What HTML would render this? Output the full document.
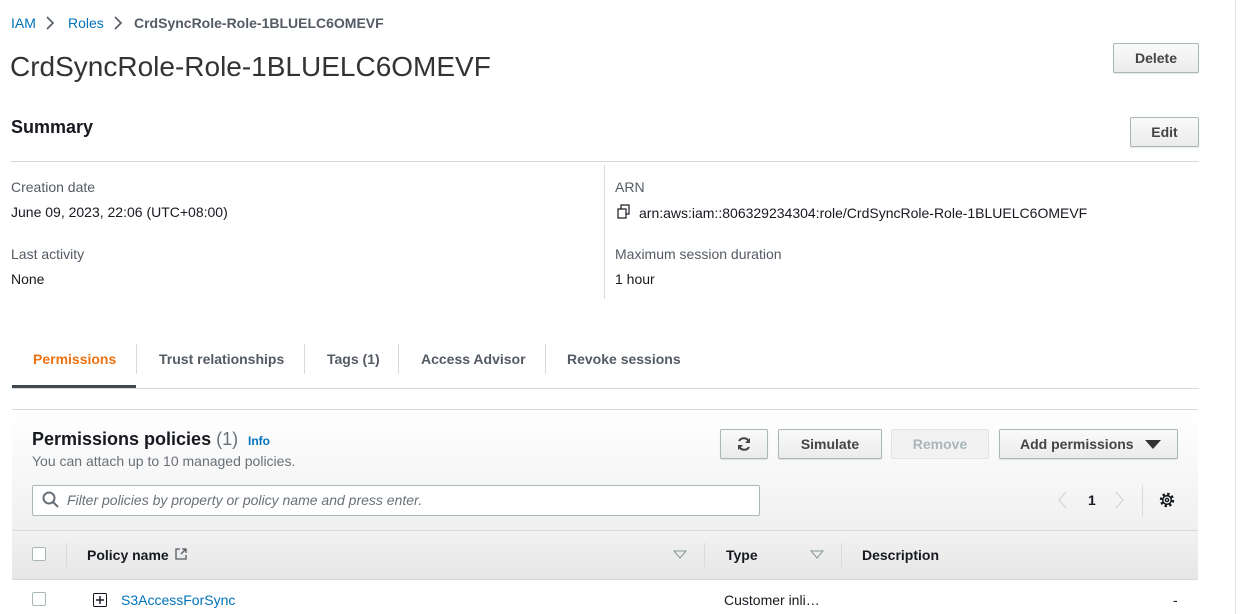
<!DOCTYPE html>
<html><head><style>
*{box-sizing:border-box;margin:0;padding:0}
body{width:1240px;height:614px;overflow:hidden;background:#fff;font-family:"Liberation Sans",Arial,sans-serif;color:#16191f;position:relative}
.a{position:absolute;white-space:nowrap}
.btn{position:absolute;border:1px solid #aab7b8;border-radius:2px;background:linear-gradient(#fafafa,#ebebeb);font-weight:bold;font-size:14px;color:#444;text-align:center;box-shadow:0 1px 1px rgba(0,0,0,.1)}
.lbl{font-size:14px;color:#545b64}
.val{font-size:14px;color:#16191f}
.tab{font-size:14px;font-weight:bold;color:#545b64;top:351px}
.sep{position:absolute;width:1px;background:#d5dbdb}
</style></head><body>
<div class="a" style="left:1235px;top:0;width:1px;height:614px;background:#e1e4e8"></div>
<div class="a" style="left:11px;top:15px;font-size:14px;color:#0073bb">IAM</div>
<svg class="a" style="left:45px;top:16px" width="10" height="14"><path d="M2 1l6 6-6 6" stroke="#545b64" stroke-width="1.6" fill="none"/></svg>
<div class="a" style="left:68px;top:15px;font-size:14px;color:#0073bb">Roles</div>
<svg class="a" style="left:113px;top:16px" width="10" height="14"><path d="M2 1l6 6-6 6" stroke="#545b64" stroke-width="1.6" fill="none"/></svg>
<div class="a" style="left:134px;top:15px;font-size:14px;color:#545b64;font-weight:bold">CrdSyncRole-Role-1BLUELC6OMEVF</div>
<div class="a" style="left:10px;top:51px;font-size:28px;color:#333">CrdSyncRole-Role-1BLUELC6OMEVF</div>
<div class="btn" style="left:1113px;top:43px;width:86px;height:30px;line-height:28px">Delete</div>
<div class="a" style="left:11px;top:117px;font-size:18px;font-weight:bold;color:#16191f">Summary</div>
<div class="btn" style="left:1130px;top:117px;width:69px;height:30px;line-height:28px">Edit</div>
<div class="a" style="left:11px;top:161px;width:1188px;height:1px;background:#d5dbdb"></div>
<div class="sep" style="left:604px;top:165px;height:134px"></div>
<div class="a lbl" style="left:11px;top:179px">Creation date</div>
<div class="a val" style="left:11px;top:204px">June 09, 2023, 22:06 (UTC+08:00)</div>
<div class="a lbl" style="left:11px;top:246px">Last activity</div>
<div class="a val" style="left:11px;top:271px">None</div>
<div class="a lbl" style="left:615px;top:179px">ARN</div>
<svg class="a" style="left:616px;top:204px" width="16" height="16"><rect x="5" y="1" width="8" height="9" fill="none" stroke="#16191f" stroke-width="1.2"/><rect x="2" y="5" width="8" height="9" fill="#fff" stroke="#16191f" stroke-width="1.2"/></svg>
<div class="a val" style="left:639px;top:205px">arn:aws:iam::806329234304:role/CrdSyncRole-Role-1BLUELC6OMEVF</div>
<div class="a lbl" style="left:615px;top:246px">Maximum session duration</div>
<div class="a val" style="left:615px;top:271px">1 hour</div>
<div class="a tab" style="left:33px;color:#ec7211">Permissions</div>
<div class="sep" style="left:136px;top:344px;height:30px"></div>
<div class="a tab" style="left:159px">Trust relationships</div>
<div class="sep" style="left:304px;top:344px;height:30px"></div>
<div class="a tab" style="left:327px">Tags (1)</div>
<div class="sep" style="left:398px;top:344px;height:30px"></div>
<div class="a tab" style="left:421px">Access Advisor</div>
<div class="sep" style="left:545px;top:344px;height:30px"></div>
<div class="a tab" style="left:567px">Revoke sessions</div>
<div class="a" style="left:12px;top:388px;width:1187px;height:1px;background:#d5dbdb"></div>
<div class="a" style="left:12px;top:385px;width:124px;height:3px;background:#414750"></div>
<div class="a" style="left:12px;top:409px;width:1186px;height:122px;background:linear-gradient(#fff,#f0f0f0);border-top:1px solid #d5dbdb"></div>
<div class="a" style="left:32px;top:429px;font-size:18px;font-weight:bold;color:#16191f">Permissions policies <span style="font-weight:normal;color:#687078">(1)</span></div>
<div class="a" style="left:248px;top:434px;font-size:12px;font-weight:bold;color:#0073bb">Info</div>
<div class="a" style="left:32px;top:453px;font-size:14px;color:#687078">You can attach up to 10 managed policies.</div>
<div class="btn" style="left:720px;top:429px;width:48px;height:30px"><svg style="margin-top:6px" width="16" height="16" viewBox="0 0 16 16"><path d="M13 6A5.5 5.5 0 0 0 3 5M3 10a5.5 5.5 0 0 0 10 1" stroke="#444" stroke-width="2" fill="none"/><path d="M14 2v5h-5zM2 14V9h5z" fill="#444"/></svg></div>
<div class="btn" style="left:778px;top:429px;width:104px;height:30px;line-height:28px">Simulate</div>
<div class="btn" style="left:891px;top:429px;width:98px;height:30px;line-height:28px;color:#aab7b8;background:#f2f2f2;border-color:#e1e4e8;box-shadow:none">Remove</div>
<div class="btn" style="left:999px;top:429px;width:179px;height:30px;line-height:28px;text-align:left;padding-left:20px">Add permissions <svg style="position:absolute;left:145px;top:10px" width="16" height="10"><path d="M0 0h16L8 9z" fill="#333"/></svg></div>
<div class="a" style="left:32px;top:485px;width:728px;height:31px;background:#fff;border:1px solid #aab7b8;border-radius:2px"></div>
<svg class="a" style="left:42px;top:491px" width="18" height="18"><circle cx="7" cy="7" r="5.5" stroke="#687078" stroke-width="2" fill="none"/><path d="M11 11l5 5" stroke="#687078" stroke-width="2"/></svg>
<div class="a" style="left:67px;top:492px;font-size:14px;font-style:italic;color:#687078">Filter policies by property or policy name and press enter.</div>
<svg class="a" style="left:1056px;top:491px" width="12" height="18"><path d="M10 1L3 9l7 8" stroke="#d5dbdb" stroke-width="1.5" fill="none"/></svg>
<div class="a" style="left:1088px;top:492px;font-size:14px;font-weight:bold;color:#16191f">1</div>
<svg class="a" style="left:1114px;top:491px" width="12" height="18"><path d="M2 1l7 8-7 8" stroke="#d5dbdb" stroke-width="1.5" fill="none"/></svg>
<div class="sep" style="left:1142px;top:485px;height:31px"></div>
<svg class="a" style="left:1158px;top:491px" width="18" height="18" viewBox="0 0 18 18"><circle cx="9" cy="9" r="6" stroke="#16191f" stroke-width="2.4" stroke-dasharray="2.4 2.3" fill="none"/><circle cx="9" cy="9" r="4.3" stroke="#16191f" stroke-width="1.6" fill="none"/><circle cx="9" cy="9" r="1.6" stroke="#16191f" stroke-width="1.4" fill="none"/></svg>
<div class="a" style="left:12px;top:530px;width:1186px;height:50px;background:linear-gradient(#f2f2f2,#e6e6e6);border-top:1px solid #d5dbdb;border-bottom:1px solid #d5dbdb"></div>
<div class="a" style="left:32px;top:547px;width:14px;height:14px;border:1px solid #aab7b8;background:#fff;border-radius:2px"></div>
<div class="sep" style="left:66px;top:543px;height:24px"></div>
<div class="a" style="left:87px;top:547px;font-size:14px;font-weight:bold;color:#16191f">Policy name</div>
<svg class="a" style="left:174px;top:547px" width="14" height="14"><path d="M6 2H2v10h10V8" stroke="#545b64" stroke-width="1.3" fill="none"/><path d="M7 7l5-5M8 2h4v4" stroke="#545b64" stroke-width="1.3" fill="none"/></svg>
<svg class="a" style="left:673px;top:550px" width="14" height="9"><path d="M1 1h12L7 8z" stroke="#879596" fill="none"/></svg>
<div class="sep" style="left:704px;top:543px;height:24px"></div>
<div class="a" style="left:726px;top:547px;font-size:14px;font-weight:bold;color:#16191f">Type</div>
<svg class="a" style="left:810px;top:550px" width="14" height="9"><path d="M1 1h12L7 8z" stroke="#879596" fill="none"/></svg>
<div class="sep" style="left:841px;top:543px;height:24px"></div>
<div class="a" style="left:862px;top:547px;font-size:14px;font-weight:bold;color:#16191f">Description</div>
<div class="a" style="left:32px;top:592px;width:14px;height:14px;border:1px solid #aab7b8;background:#fff;border-radius:2px"></div>
<svg class="a" style="left:93px;top:593px" width="14" height="14"><rect x="0.5" y="0.5" width="13" height="13" rx="1" stroke="#16191f" fill="none"/><path d="M3 7h8M7 3v8" stroke="#16191f" stroke-width="1.4"/></svg>
<div class="a" style="left:121px;top:592px;font-size:14px;color:#0073bb">S3AccessForSync</div>
<div class="a" style="left:724px;top:592px;font-size:14px;color:#16191f">Customer inli…</div>
<div class="a" style="left:1173px;top:592px;font-size:14px;color:#16191f">-</div>
</body></html>
